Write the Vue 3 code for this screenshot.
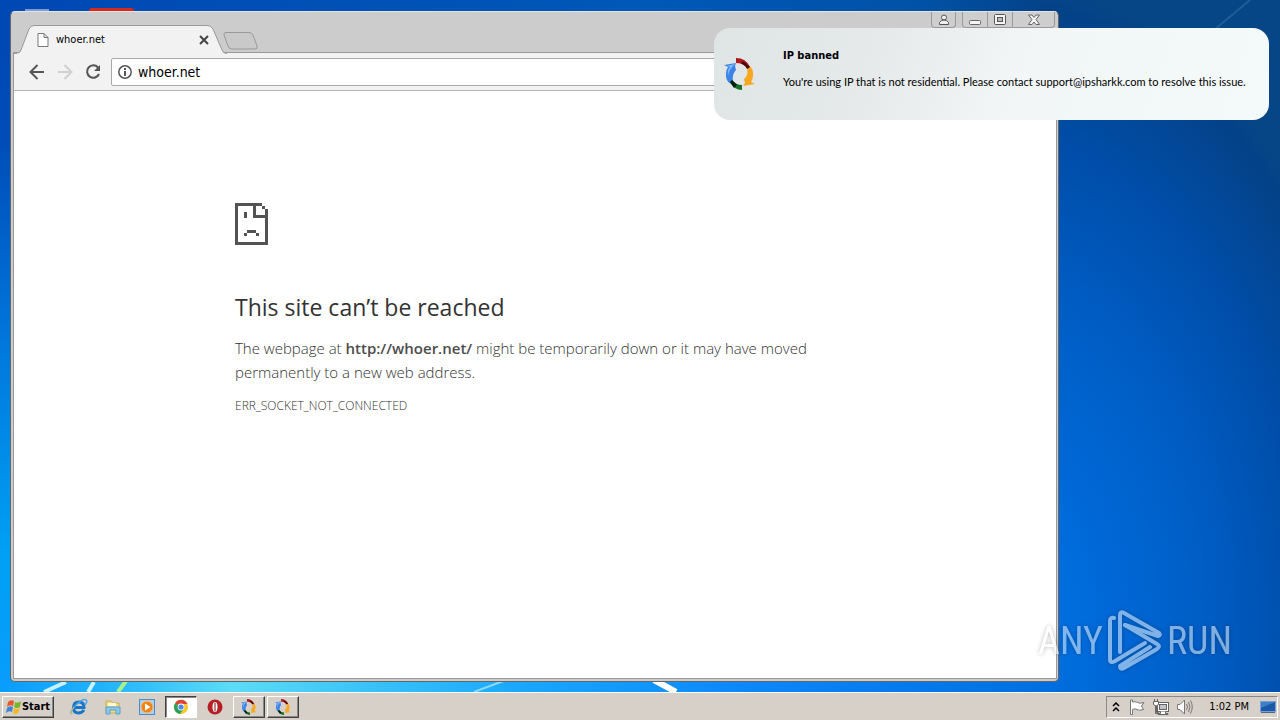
<template>
	<div class="desktop">
		<div class="desktop__area">
			<svg class="wallpaper" viewBox="0 0 1280 692" preserveAspectRatio="none" aria-hidden="true">
				<defs>
					<linearGradient id="wpBase" x1="0" y1="0" x2="0" y2="1">
						<stop offset="0" stop-color="#0048b4" />
						<stop offset="0.2" stop-color="#004cb8" />
						<stop offset="0.5" stop-color="#0078dc" />
						<stop offset="0.8" stop-color="#00a0f4" />
						<stop offset="1" stop-color="#089cfc" />
					</linearGradient>
					<linearGradient id="wpTop" x1="0" y1="0" x2="1" y2="0">
						<stop offset="0" stop-color="#0048b4" />
						<stop offset="0.5" stop-color="#0058b8" />
						<stop offset="0.72" stop-color="#0052a6" />
						<stop offset="0.82" stop-color="#044288" />
					</linearGradient>
					<radialGradient id="wpRight" gradientUnits="userSpaceOnUse" cx="0" cy="0" r="400"
						gradientTransform="translate(1000 620) scale(1 1.6)">
						<stop offset="0" stop-color="#0072e6" />
						<stop offset="0.2" stop-color="#006cdc" />
						<stop offset="0.5" stop-color="#005ec6" />
						<stop offset="0.75" stop-color="#004eaa" />
						<stop offset="0.96" stop-color="#044288" />
						<stop offset="1" stop-color="#064686" />
					</radialGradient>
					<linearGradient id="wpGlow" x1="0" y1="0" x2="1" y2="0">
						<stop offset="0" stop-color="#089cfc" />
						<stop offset="0.1" stop-color="#22b4fa" />
						<stop offset="0.22" stop-color="#5cdcf6" />
						<stop offset="0.32" stop-color="#40c8f6" />
						<stop offset="0.5" stop-color="#18a6fc" />
						<stop offset="0.7" stop-color="#0c88fa" />
						<stop offset="1" stop-color="#006ee0" />
					</linearGradient>
				</defs>
				<rect width="1280" height="692" fill="url(#wpBase)" />
				<rect width="1280" height="24" fill="url(#wpTop)" />
				<rect x="1040" width="240" height="692" fill="url(#wpRight)" />
				<path d="M1214 30L1250 0" stroke="#4a7fb4" stroke-width="2" opacity="0.4" />
				<rect y="680" width="1056" height="12" fill="url(#wpGlow)" />
				<path d="M44 692L66 682M88 692L94 682" stroke="#c8f2ff" stroke-width="4" />
				<path d="M118 692L126 681" stroke="#a8f090" stroke-width="4" />
				<path d="M474 692L506 680" stroke="#88d8ff" stroke-width="2" />
				<path d="M654 680L676 692" stroke="#ffffff" stroke-width="6" />
			</svg>
			<span class="peek peek--white"></span>
			<span class="peek peek--red"></span>

			<main class="window">
				<header class="titlebar">
					<div class="tab">
						<svg class="tab__shape" viewBox="0 0 214 29" aria-hidden="true">
							<path d="M0 28.500H3Q7 28.500 8 25L16 4Q18 0.500 21 0.500H194Q198 0.500 200 4L209 25Q210 28.500 214 28.500" fill="#f2f2f2"
								stroke="#999" />
							<path d="M4 29H211" stroke="#f2f2f2" stroke-width="1" />
						</svg>
						<svg class="tab__page" width="12" height="14" viewBox="0 0 12 14" fill="#fff" stroke="#777">
							<path d="M1 0.500H7L11 4.500V13.500H1ZM7 0.500V4.500H11" />
						</svg>
						<span class="tab__title">whoer.net</span>
						<button class="tab__close" aria-label="Close tab">
							<svg width="10" height="10" viewBox="0 0 10 10" stroke="#444" stroke-width="2">
								<path d="M1 1L9 9M9 1L1 9" />
							</svg>
						</button>
					</div>
					<button class="new-tab" aria-label="New tab">
						<svg width="36" height="18" viewBox="0 0 36 18">
							<path d="M3 0.500H26Q29 0.500 30 3L34 14Q35 17 32 17H9Q6 17 5 14L1 3Q0.500 0.500 3 0.500Z" fill="#c9c9c9"
								stroke="#999" />
						</svg>
					</button>
					<div class="controls">
						<button class="controls__btn controls__btn--user" aria-label="Profile">
							<svg width="12" height="12" viewBox="0 0 12 12" fill="#eee" stroke="#555">
								<circle cx="6" cy="3.500" r="2.500" />
								<path d="M1.500 10.500V8.500Q3 6 6 6T10.500 8.500V10.500Z" />
							</svg>
						</button>
						<button class="controls__btn controls__btn--min" aria-label="Minimize">
							<svg width="12" height="12" viewBox="0 0 12 12" fill="#f4f4f4" stroke="#666">
								<rect x="0.500" y="6.500" width="11" height="4" rx="1" />
							</svg>
						</button>
						<button class="controls__btn" aria-label="Maximize">
							<svg width="12" height="12" viewBox="0 0 12 12" fill="#f4f4f4" stroke="#555">
								<rect x="0.500" y="0.500" width="11" height="10" rx="1" />
								<rect x="3.500" y="3.500" width="5" height="4" fill="#bbb" />
							</svg>
						</button>
						<button class="controls__btn controls__btn--close" aria-label="Close">
							<svg width="12" height="12" viewBox="0 0 12 12" fill="#f4f4f4" stroke="#666">
								<path d="M0.500 1H4L6 3.500L8 1H11.500L8 5.500L11.500 10.500H8L6 8L4 10.500H0.500L4 5.500Z" />
							</svg>
						</button>
					</div>
				</header>

				<nav class="toolbar">
					<button class="toolbar__btn" aria-label="Back">
						<svg width="16" height="16" viewBox="0 0 16 16" fill="none" stroke="#555" stroke-width="2">
							<path d="M15 8H2M8.500 1L1.500 8L8.500 15" />
						</svg>
					</button>
					<button class="toolbar__btn" aria-label="Forward">
						<svg width="16" height="16" viewBox="0 0 16 16" fill="none" stroke="#d0d0d0" stroke-width="2">
							<path d="M1 8H14M7.500 1L14.500 8L7.500 15" />
						</svg>
					</button>
					<button class="toolbar__btn" aria-label="Reload">
						<svg width="16" height="16" viewBox="0 0 16 16">
							<path d="M13 3.500A6.200 6.200 0 1 0 14 10" fill="none" stroke="#555" stroke-width="2" />
							<path d="M15 1V7H9Z" fill="#555" />
						</svg>
					</button>
					<div class="omnibox">
						<svg width="14" height="14" viewBox="0 0 14 14" fill="none" stroke="#555">
							<circle cx="7" cy="7" r="6.200" stroke-width="1.500" />
							<path d="M7 6V11M7 3V5" stroke-width="2" />
						</svg>
						<input v-model="url" class="omnibox__input" type="text" aria-label="Address" spellcheck="false" />
					</div>
				</nav>

				<section class="page">
					<div class="error">
						<svg class="error__icon" width="33" height="42" viewBox="0 0 11 14" fill="#535353"
							shape-rendering="crispEdges">
							<path
								d="M0 0H9V1H7V4H10V2H11V14H0ZM1 1V13H10V5H6V1ZM9 1H10V2H9ZM3 3H4V5H3ZM4 9H7V10H4ZM3 10H4V11H3ZM7 10H8V11H7Z"
								fill-rule="evenodd" />
						</svg>
						<h1 class="error__title">This site can’t be reached</h1>
						<p class="error__text">
							The webpage at <strong>http://whoer.net/</strong> might be temporarily down or it may have moved
							permanently to a new web address.
						</p>
						<p class="error__code">ERR_SOCKET_NOT_CONNECTED</p>
					</div>
				</section>
			</main>

			<aside class="toast">
				<svg class="toast__icon" width="32" height="32" viewBox="0 0 32 32">
					<use href="#swirl" />
				</svg>
				<div>
					<h2 class="toast__title">IP banned</h2>
					<p class="toast__text">
						You're using IP that is not residential. Please contact support@ipsharkk.com to resolve this issue.
					</p>
				</div>
			</aside>

			<div class="watermark">
				<span>ANY</span>
				<svg width="54" height="62" viewBox="1 0 54 62" fill="none" stroke="#fff" stroke-width="4"
					stroke-linejoin="round" stroke-linecap="round">
					<path d="M7 8Q3 7 3 11V49Q3 54 8 51L38 33" />
					<path d="M13 42V5Q13 1 17 3L52 23Q54 25 51 26L18 15" />
					<path d="M18 15L50 34Q54 36 50 39L17 58Q13 60 13 56L43 37" />
				</svg>
				<span>RUN</span>
			</div>
		</div>

		<footer class="taskbar">
			<button class="start">
				<svg width="16" height="16" viewBox="0 0 16 16">
					<path d="M2 3Q5 0 8 2L7 7Q4 5 1 8Z" fill="#e8562a" />
					<path d="M9 3Q12 5 15 2L14 8Q11 10 8 8Z" fill="#75b82c" />
					<path d="M1 9Q4 6 7 8L6 13Q3 11 0 14Z" fill="#3c86d8" />
					<path d="M8 9Q11 11 14 9L12 14Q9 16 7 14Z" fill="#f4b824" />
				</svg>
				Start
			</button>
			<div class="tasks">
				<button v-for="task in tasks" :key="task.id" class="task" :class="task.state && `task--${task.state}`"
					:aria-label="task.label">
					<svg v-if="task.icon === 'ie'" width="18" height="18" viewBox="0 0 18 18" fill="none">
						<path d="M14 12Q12 15 8.500 15Q3.500 15 3.500 9.500T9 4Q14 4 14 9.500H5" stroke="#1976c8" stroke-width="3" />
						<path d="M2 16Q-1 14 6 7T16 2Q18 3 15 7" stroke="#48a8e8" stroke-width="1.500" />
						<path d="M2 16Q0 14 4 9" stroke="#e8c040" stroke-width="1" />
					</svg>
					<svg v-else-if="task.icon === 'folder'" width="18" height="18" viewBox="0 0 18 18">
						<path d="M2 3H7L9 5H15V15H2Z" fill="#f0d880" stroke="#d0ac50" />
						<path d="M4 5H12V8H4Z" fill="#fff8d8" />
						<path d="M2 9H16V16H12V12H6V16H2Z" fill="#88c8ec" stroke="#58a0cc" />
					</svg>
					<svg v-else-if="task.icon === 'player'" width="18" height="18" viewBox="0 0 18 18">
						<rect x="1.500" y="1.500" width="15" height="15" fill="#a8d0f0" stroke="#4c8cc8" />
						<circle cx="9" cy="9" r="6" fill="#f08418" stroke="#f8c078" />
						<path d="M7 5.500L12.500 9L7 12.500Z" fill="#fff" />
					</svg>
					<svg v-else-if="task.icon === 'chrome'" width="16" height="16" viewBox="0 0 16 16">
						<circle cx="8" cy="8" r="7" fill="#f8c828" />
						<path d="M8 8L2 4.400A7 7 0 0 1 14.500 5H8Z" fill="#dc4434" />
						<path d="M8 8L2 4.400A7 7 0 0 0 7 15L10.500 10Z" fill="#28a058" />
						<circle cx="8" cy="8" r="3.400" fill="#fff" />
						<circle cx="8" cy="8" r="2.600" fill="#4888e8" />
					</svg>
					<svg v-else-if="task.icon === 'opera'" width="16" height="16" viewBox="0 0 16 16">
						<ellipse cx="8" cy="8" rx="7.500" ry="7.500" fill="#b81c24" />
						<ellipse cx="8" cy="8" rx="2.500" ry="5" fill="#fff" />
						<path d="M8 3.500V12.500" stroke="#b88888" stroke-width="2" />
					</svg>
					<svg v-else width="16" height="16" viewBox="0 0 32 32">
						<use href="#swirl" />
					</svg>
				</button>
			</div>
			<div class="tray">
				<svg width="10" height="10" viewBox="0 0 10 10" fill="none" stroke="#000" stroke-width="1.500">
					<path d="M2 4L5 1L8 4M2 9L5 6L8 9" />
				</svg>
				<svg width="16" height="16" viewBox="0 0 16 16" fill="#fff" stroke="#777">
					<path d="M1.500 1V15.500H3.500V10.500Q6 9 8 10.500T14.500 10.500L12.500 7L15 3.500Q11 5 8.500 3.500T3.500 3V1Z" />
				</svg>
				<svg width="16" height="16" viewBox="0 0 16 16" fill="#fff" stroke="#666">
					<rect x="4.500" y="3.500" width="11" height="9" />
					<rect x="6.500" y="5.500" width="7" height="5" fill="#c4c4c4" />
					<path d="M7.500 12.500V14.500H5V15.500H15V14.500H12.500V12.500" />
					<path d="M0.500 2.500H5.500V5Q5.500 6.500 3.500 6.500V13.500H5.500V14.500H2.500V6.500Q0.500 6.500 0.500 5ZM1.500 0V2.500M4.500 0V2.500" />
				</svg>
				<svg width="16" height="16" viewBox="0 0 16 16" fill="#fff" stroke="#777">
					<path d="M0.500 5.500H3L7.500 1V15L3 10.500H0.500Z" />
					<path d="M9.500 5Q11.500 8 9.500 11M11.500 3Q14.500 8 11.500 13M13.500 1.500Q17 8 13.500 14.500" fill="none" />
				</svg>
				<time class="tray__time">1:02 PM</time>
				<svg width="16" height="14" viewBox="0 0 16 14">
					<rect x="0.500" y="1.500" width="15" height="10" fill="#1c58a8" stroke="#78a0d0" />
					<path d="M1 2H15L1 8Z" fill="#3c80cc" />
					<path d="M1 12.500H15" stroke="#506888" />
				</svg>
			</div>
		</footer>

		<svg class="sprite" width="0" height="0" aria-hidden="true">
			<symbol id="swirl" viewBox="0 0 32 32">
				<path d="M0 7L12 5L11 8L12 12Q8 16 9 23L13 27Q1 27 2 15Q2 12 4 9Z" fill="#3c84e8" />
				<path d="M3 8L11 6Q5 11 4 18Q3 12 6 9Z" fill="#88bcf8" />
				<path d="M31 26L19 28L21 25L20 21Q25 17 23 10L20 7Q30 7 29 18Q29 21 27 24Z" fill="#f8a820" />
				<path d="M12 0Q22 0 26 9L23 10Q19 5 12 5Z" fill="#b01820" />
				<path d="M19 3L26 9L23 11Q21 7 17 5Z" fill="#480808" />
				<path d="M8 22Q12 27 18 27V32Q10 32 6 24Z" fill="#187028" />
				<path d="M8 22L13 27L10 30L6 24Z" fill="#082010" />
			</symbol>
		</svg>
	</div>
</template>

<script setup>
import { ref } from "vue";

const url = ref("whoer.net");

const tasks = [
	{ id: 1, icon: "ie", label: "Internet Explorer" },
	{ id: 2, icon: "folder", label: "Windows Explorer" },
	{ id: 3, icon: "player", label: "Media Player" },
	{ id: 4, icon: "chrome", label: "Google Chrome", state: "active" },
	{ id: 5, icon: "opera", label: "Opera" },
	{ id: 6, icon: "swirl", label: "Proxy client", state: "raised" },
	{ id: 7, icon: "swirl", label: "Proxy client", state: "raised" },
];
</script>

<style>
body {
	margin: 0;
}
</style>

<style scoped>
.desktop {
	min-height: 100vh;
	display: flex;
	flex-direction: column;
	font-family: "DejaVu Sans Condensed", "DejaVu Sans", sans-serif;
	font-size: 11px;
	color: #000;
}

.desktop * {
	box-sizing: border-box;
}

.desktop button {
	margin: 0;
	padding: 0;
	border: 0;
	background: none;
	font: inherit;
	color: inherit;
	display: flex;
	align-items: center;
	justify-content: center;
}

.desktop svg {
	flex-shrink: 0;
}

.desktop__area {
	flex: 1;
	position: relative;
	display: flex;
	padding: 11px 221px 10px 10px;
	background: #0058b8;
}

.wallpaper {
	position: absolute;
	inset: 0;
	width: 100%;
	height: 100%;
}

.peek {
	position: absolute;
	top: 8px;
	height: 6px;
}

.peek--white {
	left: 25px;
	top: 9px;
	width: 24px;
	background: #7c9cd8;
}

.peek--red {
	left: 89px;
	width: 45px;
	border-radius: 3px 3px 0 0;
	background: #d8281c;
}

.window {
	position: relative;
	flex: 1;
	display: flex;
	flex-direction: column;
	min-width: 0;
	padding: 0 1px 2px 2px;
	border: 1px solid #666;
	border-top-color: #e4e4e4;
	border-radius: 5px;
	background: #ccc;
}

.titlebar {
	display: flex;
	align-items: flex-start;
	height: 41px;
	border-bottom: 1px solid #999;
	margin-right: 2px;
}

.tab {
	position: relative;
	display: flex;
	align-items: center;
	width: 214px;
	height: 29px;
	margin-top: 13px;
	padding: 0 18px 0 24px;
}

.tab__shape {
	position: absolute;
	left: 0;
	top: 0;
	width: 214px;
	height: 29px;
	overflow: visible;
}

.tab__page,
.tab__title,
.tab__close {
	position: relative;
}

.tab__title {
	flex: 1;
	margin-left: 7px;
}

.desktop .new-tab {
	margin: 20px 0 0 -4px;
}

.controls {
	display: flex;
	margin-left: auto;
}

.desktop .controls__btn {
	width: 25px;
	height: 16px;
	border: 1px solid #999;
	border-width: 0 1px 1px 0;
	background: #cecece;
}

.desktop .controls__btn--user {
	border-width: 0 1px 1px;
	border-radius: 0 0 4px 4px;
	margin-right: 6px;
}

.desktop .controls__btn--min {
	width: 26px;
	border-width: 0 1px 1px;
	border-radius: 0 0 0 4px;
}

.desktop .controls__btn--close {
	width: 42px;
	border-radius: 0 0 4px 0;
}

.toolbar {
	display: flex;
	align-items: center;
	gap: 12px;
	height: 38px;
	padding: 0 8px 0 15px;
	border: 1px solid #999;
	border-width: 0 1px 1px;
	border-bottom-color: #b4b4b4;
	background: #f2f2f2;
}

.toolbar__btn {
	width: 16px;
	height: 16px;
}

.omnibox {
	flex: 1;
	display: flex;
	align-items: center;
	gap: 6px;
	height: 28px;
	margin-left: -2px;
	padding: 0 6px;
	border: 1px solid #a8a8a8;
	border-radius: 2px;
	background: #fff;
}

.omnibox__input {
	flex: 1;
	min-width: 0;
	padding: 0;
	border: 0;
	outline: 0;
	background: transparent;
	font: inherit;
	font-size: 14px;
	color: #000;
}

.page {
	flex: 1;
	border: 1px solid #999;
	border-top: 0;
	background: #fff;
	padding: 112px 24px 24px;
}

.error {
	max-width: 600px;
	margin: 0 auto;
	font-family: "Open Sans", "Noto Sans", sans-serif;
	color: #333;
}

.error__icon {
	display: block;
}

.error__title {
	margin: 46px 0 13px;
	font-size: 23px;
	line-height: 32px;
	font-weight: 400;
}

.error__text {
	margin: 0 0 14px;
	font-size: 15px;
	line-height: 24px;
	font-weight: 300;
}

.error__text strong {
	font-weight: 600;
	color: #4c4c4c;
}

.error__code {
	margin: 0;
	font-size: 12px;
	line-height: 16px;
	font-weight: 300;
}

.toast {
	position: absolute;
	top: 28px;
	right: 11px;
	display: flex;
	gap: 27px;
	width: 555px;
	height: 92px;
	padding: 19px 10px;
	border-radius: 16px;
	background: linear-gradient(110deg, #dfe4e4 0%, #e6eaea 30%, #f2f6f6 55%, #f4f9f9 100%);
}

.toast__icon {
	margin-top: 11px;
}

.toast__title {
	margin: 0 0 8px;
	font-size: 11px;
	line-height: 18px;
	font-weight: 700;
}

.toast__text {
	margin: 0;
	font-family: Lato, "Liberation Sans", sans-serif;
	line-height: 18px;
	white-space: nowrap;
}

.watermark {
	position: absolute;
	right: 48px;
	bottom: 20px;
	display: flex;
	align-items: center;
	gap: 5px;
	font-family: "Liberation Sans Narrow", "Roboto Condensed", "Open Sans Condensed", sans-serif;
	font-size: 38px;
	line-height: 62px;
	color: #fff;
	opacity: 0.5;
	filter: drop-shadow(0 0 2px rgba(0, 0, 0, 0.5));
}

.taskbar {
	display: flex;
	align-items: center;
	height: 28px;
	padding: 0 2px;
	border-top: 1px solid #fff;
	background: #d6d0c8;
}

.desktop .start {
	gap: 0;
	width: 52px;
	height: 22px;
	border: 1px solid #fff;
	border-right-color: #404040;
	border-bottom-color: #404040;
	box-shadow: inset -1px -1px #888;
	font-weight: 700;
}

.tasks {
	display: flex;
	gap: 2px;
	margin-left: 9px;
}

.desktop .task {
	width: 32px;
	height: 22px;
}

.desktop .task--active {
	border: 1px solid #fff;
	border-left-color: #404040;
	border-top-color: #404040;
	box-shadow: inset 1px 1px #888;
	background: #fff;
}

.desktop .task--raised {
	border: 1px solid #fff;
	border-right-color: #404040;
	border-bottom-color: #404040;
	box-shadow: inset -1px -1px #888;
}

.tray {
	display: flex;
	align-items: center;
	gap: 8px;
	height: 22px;
	margin-left: auto;
	padding: 0 1px 0 4px;
	border: 1px solid #fff;
	border-left-color: #888;
	border-top-color: #888;
}

.tray__time {
	margin: 0 3px 0 8px;
}

.sprite {
	position: absolute;
}
</style>
